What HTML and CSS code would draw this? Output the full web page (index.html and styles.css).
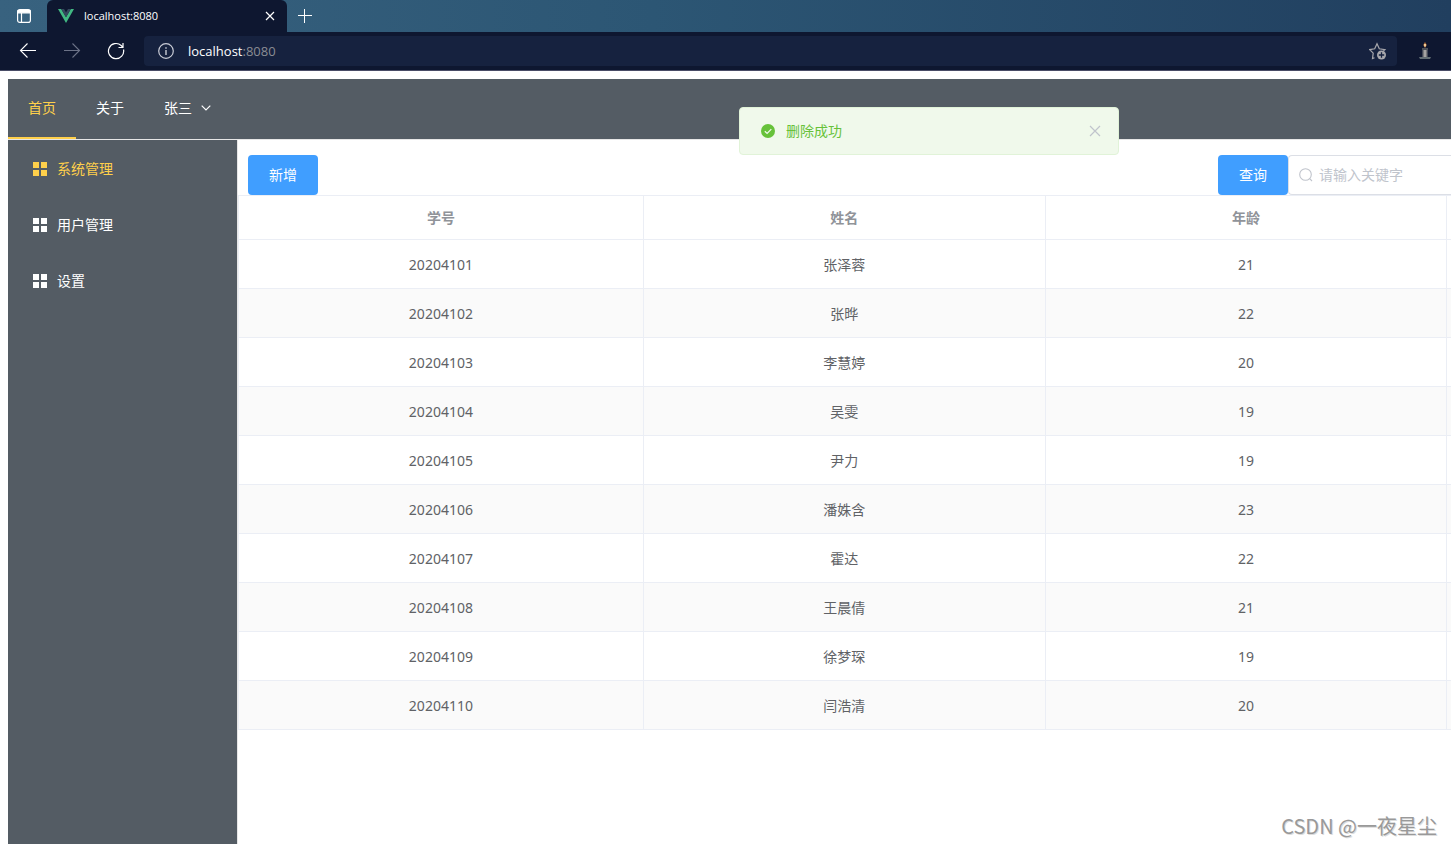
FILE: index.html
```
<!DOCTYPE html>
<html lang="zh-CN">
<head>
    <meta charset="UTF-8">
    <meta name="viewport" content="width=device-width, initial-scale=1.0">
    <title>localhost:8080</title>
    <link rel="stylesheet" href="styles.css">
</head>
<body>
    <!-- 浏览器窗口 -->
    <header class="browser">
        <div class="tab-bar">
            <button class="tab-menu" aria-label="标签页">
                <svg width="16" height="16" viewBox="0 0 16 16" fill="none" stroke="#fff" stroke-width="1.2">
                    <rect x="1.6" y="1.6" width="12.8" height="12.8" rx="2.2"/>
                    <path d="M2 2.5h12v2.3H2z" fill="#fff"/>
                    <path d="M5.5 5v9"/>
                </svg>
            </button>
            <div class="tab">
                <svg width="16" height="14" viewBox="0 0 16 14">
                    <path d="M0 0h3.2L8 8.2 12.8 0H16L8 14z" fill="#41b883"/>
                    <path d="M3.2 0H6l2 3.4L10 0h2.8L8 8.2z" fill="#35495e"/>
                </svg>
                <span class="tab-title">localhost:8080</span>
                <button class="tab-close" aria-label="关闭标签页">
                    <svg width="10" height="10" viewBox="0 0 10 10" stroke="#fff" stroke-width="1.2"><path d="M1 1l8 8M9 1L1 9"/></svg>
                </button>
            </div>
            <button class="tab-new" aria-label="新建标签页">
                <svg width="16" height="16" viewBox="0 0 16 16" stroke="#fff"><path d="M1 7.5h14M7.5 1v14"/></svg>
            </button>
        </div>
        <div class="address-bar">
            <button class="nav-btn" aria-label="后退">
                <svg width="18" height="16" viewBox="0 0 18 16" fill="none" stroke="#fff" stroke-width="1.1"><path d="M17 7.500H1.5M8.500 .5l-7 7 7 7"/></svg>
            </button>
            <button class="nav-btn" aria-label="前进">
                <svg width="18" height="16" viewBox="0 0 18 16" fill="none" stroke="#6c7387" stroke-width="1.1"><path d="M1 7.500h15.5M9.500 .5l7 7-7 7"/></svg>
            </button>
            <button class="nav-btn" aria-label="刷新">
                <svg width="18" height="18" viewBox="0 0 18 18" fill="none" stroke="#fff" stroke-width="1.2"><path d="M16.500 7.500A7.600 7.600 0 1 1 14.200 3.500L15.800 5.300M16 1v4.500h-4.500"/></svg>
            </button>
            <div class="address">
                <svg width="16" height="16" viewBox="0 0 16 16" fill="none" stroke="#c9ccd6" stroke-width="1.2"><circle cx="8" cy="8" r="7.300"/><path d="M8 7v5M8 4.200v1.500" stroke-width="1.400"/></svg>
                <span class="url">localhost<span class="port">:8080</span></span>
                <button class="favorite" aria-label="收藏">
                    <svg width="18" height="18" viewBox="0 0 18 18" fill="none" stroke="#a7a7ac" stroke-width="1.2">
                        <path d="M5.500 15.800l-2 .8.700-5.400L.8 7.600l4.900-.8L8 1.800l2.300 5 5.600.8-1.600 1.400"/>
                        <circle cx="12.500" cy="13" r="4.500" fill="#a7a7ac" stroke="none"/>
                        <path d="M12.500 10.300v5.400M9.800 13h5.400" stroke="#16223f" stroke-width="1.300"/>
                    </svg>
                </button>
            </div>
            <button class="extension" aria-label="扩展">
                <svg width="14" height="18" viewBox="0 0 14 18">
                    <path d="M4.500 6h5v9h-5z" fill="#77797c"/>
                    <path d="M4 6h6v2H4z" fill="#4a5058"/>
                    <path d="M6 8h2v7H6z" fill="#a5a3a2"/>
                    <path d="M1 15h12l-1 2H2z" fill="#626d73"/>
                    <path d="M7 0l1.800 3L7 6 5.200 3z" fill="#a8683b"/>
                    <path d="M6.200 2h1.600v2.500H6.200z" fill="#ffe3ad"/>
                </svg>
            </button>
        </div>
    </header>

    <div class="app">
        <!-- 顶部导航 -->
        <nav class="top-menu">
            <a class="top-item active" href="#">首页</a>
            <a class="top-item" href="#">关于</a>
            <button class="top-item user">张三
                <svg width="10" height="6" viewBox="0 0 10 6" fill="none" stroke="#fff" stroke-width="1.2"><path d="M.7.7L5 5 9.300.7"/></svg>
            </button>
        </nav>

        <div class="container">
            <!-- 侧边菜单 -->
            <aside class="side-menu">
                <a class="side-item active" href="#">
                    <svg class="icon-menu" width="24" height="14" viewBox="0 0 24 14" fill="currentColor"><path d="M5 0h6v6H5zM13 0h6v6h-6zM5 8h6v6H5zM13 8h6v6h-6z"/></svg>
                    系统管理
                </a>
                <a class="side-item" href="#">
                    <svg class="icon-menu" width="24" height="14" viewBox="0 0 24 14" fill="currentColor"><path d="M5 0h6v6H5zM13 0h6v6h-6zM5 8h6v6H5zM13 8h6v6h-6z"/></svg>
                    用户管理
                </a>
                <a class="side-item" href="#">
                    <svg class="icon-menu" width="24" height="14" viewBox="0 0 24 14" fill="currentColor"><path d="M5 0h6v6H5zM13 0h6v6h-6zM5 8h6v6H5zM13 8h6v6h-6z"/></svg>
                    设置
                </a>
            </aside>

            <main class="main">
                <div class="toolbar">
                    <button class="btn">新增</button>
                    <form class="search">
                        <button class="btn" type="button">查询</button>
                        <label class="search-box">
                            <svg width="14" height="14" viewBox="0 0 14 14" fill="none" stroke="#c0c4cc" stroke-width="1.1"><circle cx="6.500" cy="6.500" r="5.800"/><path d="M10.700 10.700L13 13"/></svg>
                            <input type="text" placeholder="请输入关键字" aria-label="关键字">
                        </label>
                    </form>
                </div>
                <table class="table">
                    <colgroup>
                        <col class="col-id">
                        <col class="col-data">
                        <col class="col-data">
                        <col>
                    </colgroup>
                    <thead>
                        <tr><th>学号</th><th>姓名</th><th>年龄</th><th></th></tr>
                    </thead>
                    <tbody>
                        <tr><td>20204101</td><td>张泽蓉</td><td>21</td><td></td></tr>
                        <tr><td>20204102</td><td>张晔</td><td>22</td><td></td></tr>
                        <tr><td>20204103</td><td>李慧婷</td><td>20</td><td></td></tr>
                        <tr><td>20204104</td><td>吴雯</td><td>19</td><td></td></tr>
                        <tr><td>20204105</td><td>尹力</td><td>19</td><td></td></tr>
                        <tr><td>20204106</td><td>潘姝含</td><td>23</td><td></td></tr>
                        <tr><td>20204107</td><td>霍达</td><td>22</td><td></td></tr>
                        <tr><td>20204108</td><td>王晨倩</td><td>21</td><td></td></tr>
                        <tr><td>20204109</td><td>徐梦琛</td><td>19</td><td></td></tr>
                        <tr><td>20204110</td><td>闫浩清</td><td>20</td><td></td></tr>
                    </tbody>
                </table>
            </main>
        </div>
    </div>

    <!-- 消息提示 -->
    <div class="message" role="alert">
        <svg width="14" height="14" viewBox="0 0 14 14"><circle cx="7" cy="7" r="7" fill="#67c23a"/><path d="M3.800 7.200l2.300 2.200 4.200-4.300" fill="none" stroke="#f0f9eb" stroke-width="1.300"/></svg>
        <span class="message-text">删除成功</span>
        <button class="message-close" aria-label="关闭">
            <svg width="12" height="12" viewBox="0 0 12 12" stroke="#c0c4cc" stroke-width="1.200"><path d="M1 1l10 10M11 1L1 11"/></svg>
        </button>
    </div>

    <div class="watermark">CSDN @一夜星尘</div>
</body>
</html>
```

FILE: styles.css
```
* {
    box-sizing: border-box;
}
body {
    margin: 0;
    min-height: 100vh;
    display: flex;
    flex-direction: column;
    position: relative;
    font-family: "Noto Sans", "Noto Sans CJK SC", sans-serif;
    font-size: 14px;
    line-height: 20px;
    color: #606266;
    background-color: #fff;
}
button {
    padding: 0;
    border: none;
    background: none;
    font: inherit;
    color: inherit;
    cursor: pointer;
}
a {
    text-decoration: none;
}
svg {
    display: block;
    flex: none;
}

/* 浏览器窗口 */
.browser {
    background-color: #0e1730;
    border-bottom: 1px solid #4a4d67;
}
.tab-bar {
    display: flex;
    height: 32px;
    background: linear-gradient(90deg, #38627f, #2c5674 45%, #213f5f);
}
.tab-menu {
    width: 47px;
    padding-left: 16px;
}
.tab {
    display: flex;
    align-items: center;
    width: 240px;
    padding: 0 12px 0 11px;
    border-radius: 6px 6px 0 0;
    background-color: #0e1730;
}
.tab-title {
    flex: 1;
    margin-left: 10px;
    font-family: "Open Sans", sans-serif;
    font-size: 11px;
    font-weight: 500;
    color: #fff;
}
.tab-new {
    padding: 0 10px;
}
.address-bar {
    display: flex;
    align-items: center;
    height: 38px;
    padding-left: 6px;
}
.nav-btn {
    display: flex;
    justify-content: center;
    width: 44px;
}
.address {
    display: flex;
    flex: 1;
    align-items: center;
    height: 30px;
    margin-left: 6px;
    padding: 0 10px 0 14px;
    border-radius: 4px;
    background-color: #16223f;
}
.url {
    flex: 1;
    margin-left: 14px;
    font-family: "Open Sans", sans-serif;
    font-size: 13px;
    color: #fff;
}
.port {
    color: #8b8d94;
}
.extension {
    padding: 0 19px 0 21px;
}

/* 顶部导航 */
.app {
    display: flex;
    flex: 1;
    flex-direction: column;
    margin: 8px 0 0 8px;
}
.top-menu {
    display: flex;
    height: 61px;
    background-color: #545c64;
    border-bottom: 1px solid #e6e6e6;
}
.top-item {
    display: flex;
    align-items: center;
    padding: 0 20px;
    border-bottom: 2px solid transparent;
    color: #fff;
}
.top-item.active {
    border-bottom-color: #ffd04b;
    color: #ffd04b;
}
.user {
    gap: 9px;
}

/* 侧边菜单 */
.container {
    display: flex;
    flex: 1;
}
.side-menu {
    flex: none;
    width: 230px;
    border-right: 1px solid #e6e6e6;
    background-color: #545c64;
}
.side-item {
    display: flex;
    align-items: center;
    height: 56px;
    padding: 2px 20px 0;
    color: #fff;
}
.side-item.active {
    color: #ffd04b;
}
.icon-menu {
    margin-right: 5px;
}

/* 工具栏 */
.main {
    flex: 1;
    min-width: 0;
}
.toolbar {
    display: flex;
    justify-content: space-between;
    padding: 15px 0 0 10px;
}
.btn {
    width: 70px;
    height: 40px;
    border-radius: 4px;
    background-color: #409eff;
    color: #fff;
}
.search {
    display: flex;
}
.search-box {
    display: flex;
    align-items: center;
    width: 163px;
    padding-left: 10px;
    border: 1px solid #dcdfe6;
    border-right: none;
    border-radius: 4px 0 0 4px;
}
.search-box input {
    flex: 1;
    min-width: 0;
    padding: 0 0 0 6px;
    border: none;
    outline: none;
    font: inherit;
}
.search-box input::placeholder {
    color: #c0c4cc;
}

/* 表格 */
.table {
    width: 100%;
    table-layout: fixed;
    border-collapse: separate;
    border-spacing: 0;
    border-top: 1px solid #ebeef5;
    border-left: 1px solid #ebeef5;
    text-align: center;
}
.col-id {
    width: 33.4%;
}
.col-data {
    width: 33.15%;
}
.table th,
.table td {
    height: 49px;
    padding: 2px 0 0;
    border-right: 1px solid #ebeef5;
    border-bottom: 1px solid #ebeef5;
}
.table th {
    height: 44px;
    padding: 0;
    color: #909399;
}
.table th:last-child,
.table td:last-child {
    border-right: none;
}
.table tbody tr:nth-child(even) {
    background-color: #fafafa;
}

/* 消息提示 */
.message {
    position: absolute;
    top: 107px;
    left: 739px;
    display: flex;
    align-items: center;
    width: 380px;
    height: 48px;
    padding: 0 17px 0 21px;
    border: 1px solid #e1f3d8;
    border-radius: 4px;
    background-color: #f0f9eb;
    color: #67c23a;
}
.message-text {
    flex: 1;
    margin-left: 11px;
}

.watermark {
    position: absolute;
    right: 14px;
    bottom: 4px;
    font-family: "Noto Sans CJK SC", sans-serif;
    font-size: 20px;
    line-height: 28px;
    color: #999;
    text-shadow: 1px 1px 0 #ddd;
}
```
